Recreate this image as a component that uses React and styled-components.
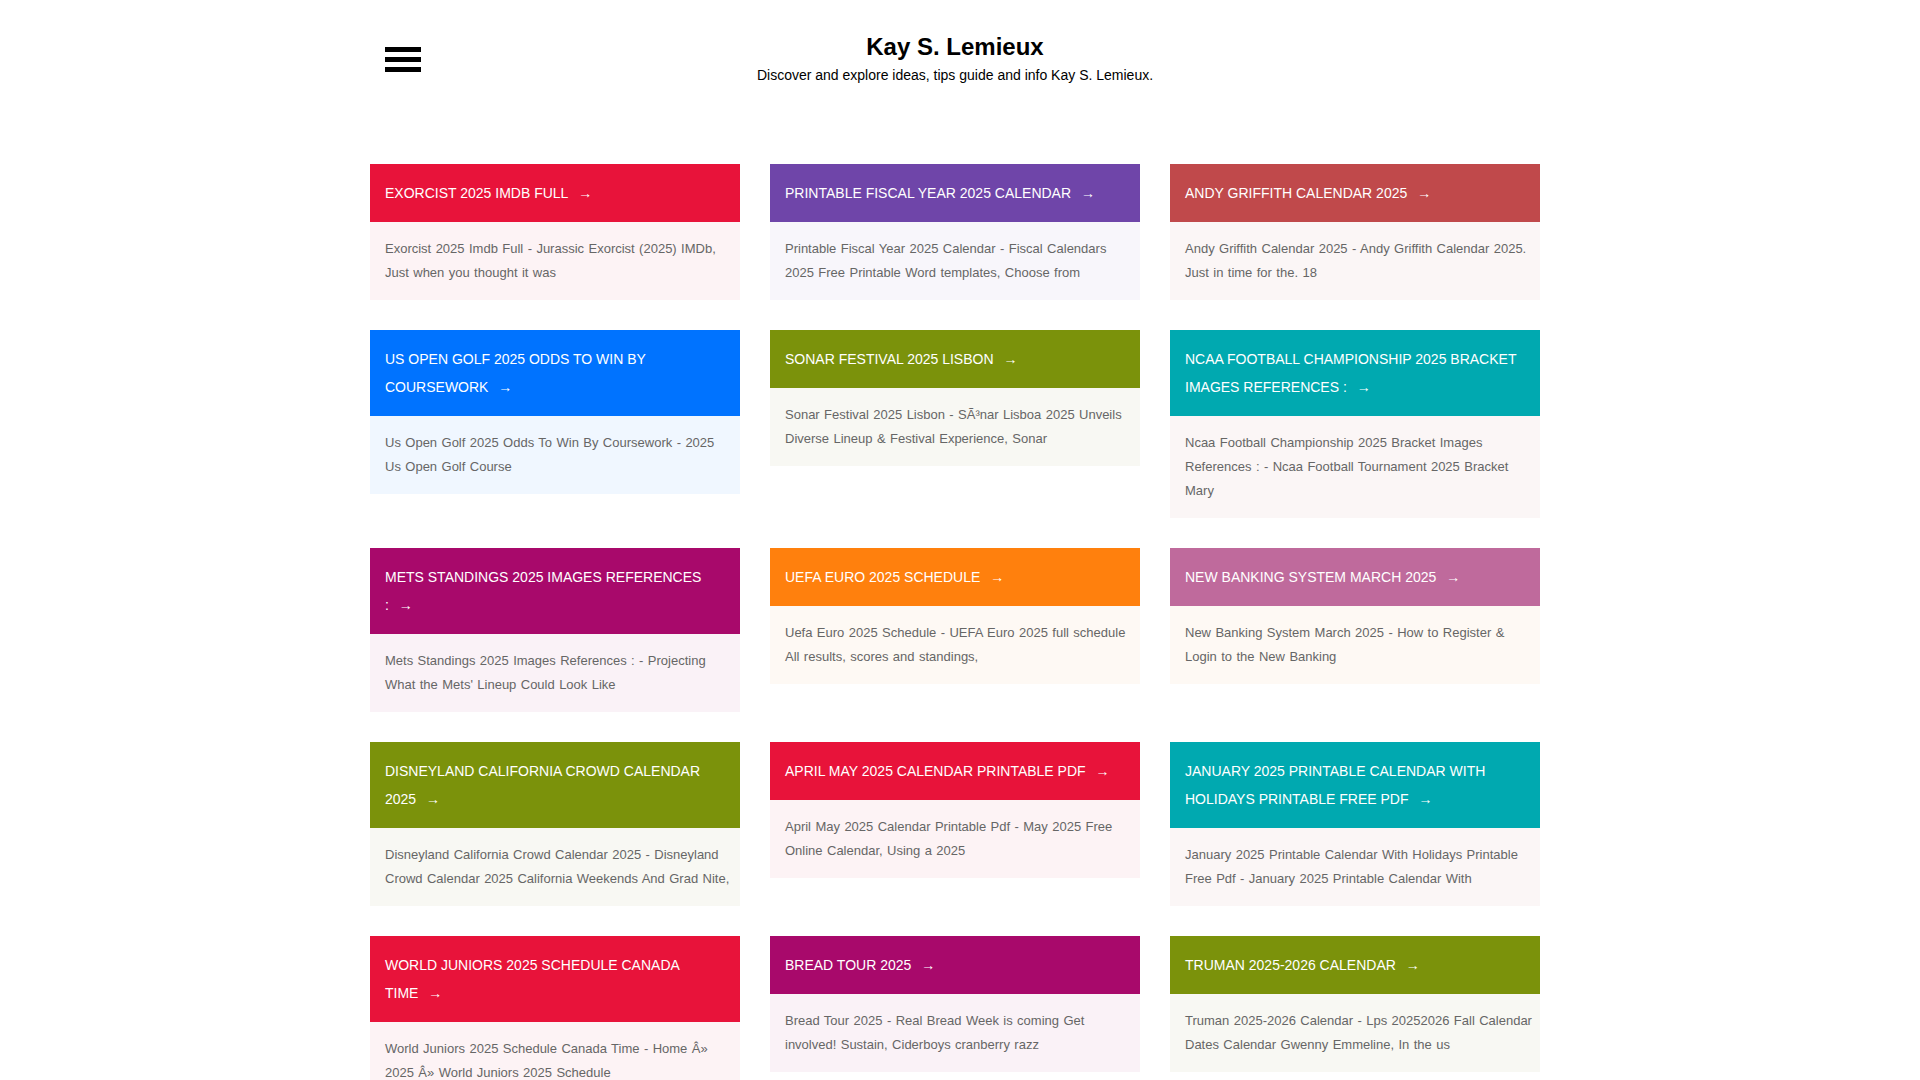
import React from "react";
import styled, { createGlobalStyle } from "styled-components";

const Global = createGlobalStyle`
  html, body { margin: 0; padding: 0; background: #fff; }
  body {
    font-family: "Liberation Sans", Arial, sans-serif;
    color: #000;
    padding-right: 10px;
  }
  * { box-sizing: border-box; }
`;

const Page = styled.div`
  width: 1170px;
  margin: 0 auto;
`;

const Header = styled.header`
  display: grid;
  grid-template-columns: 1fr auto 1fr;
  align-items: center;
  align-content: start;
  padding: 32px 0 0 15px;
  height: 164px;
`;

const Burger = styled.button`
  width: 36px;
  height: 25px;
  padding: 0;
  border: 0;
  background: transparent;
  display: flex;
  flex-direction: column;
  justify-content: space-between;
  cursor: pointer;
  justify-self: start;
  margin-top: 2px;
`;

const Bar = styled.span`
  display: block;
  height: 5px;
  width: 36px;
  background: #000;
`;

const Brand = styled.div`
  text-align: center;
  margin-left: -15px;
`;

const SiteTitle = styled.h1`
  margin: 0;
  font-size: 24px;
  line-height: 29px;
  font-weight: 700;
  color: #000;
`;

const Tagline = styled.p`
  margin: 4px 0 0;
  font-size: 14px;
  line-height: 20px;
  color: #000;
`;

const Grid = styled.main`
  display: grid;
  grid-template-columns: repeat(3, 370px);
  column-gap: 30px;
  row-gap: 30px;
  align-items: start;
`;

const Card = styled.article`
  display: flex;
  flex-direction: column;
`;

const CardHead = styled.a`
  display: block;
  background: ${(p) => p.$color};
  color: #fff;
  padding: 15px;
  font-size: 14px;
  line-height: 28px;
  text-transform: uppercase;
  text-decoration: none;
`;

const Arrow = styled.span`
  margin-left: 6px;
`;

const CardBody = styled.p`
  margin: 0;
  background: ${(p) => p.$tint};
  color: #666;
  padding: 15px 7px 15px 15px;
  font-size: 13px;
  line-height: 24px;
  word-spacing: 0.8px;
`;

const Footer = styled.footer`
  margin-top: 60px;
  padding: 40px 0 300px;
  text-align: center;
  font-size: 13px;
  color: #666;
`;

const RED = "#e8133a";
const PURPLE = "#6f45a9";
const BRICK = "#c0494b";
const BLUE = "#0073ff";
const OLIVE = "#7b920b";
const TEAL = "#00a9b0";
const MAGENTA = "#a8096b";
const ORANGE = "#ff800d";
const MAUVE = "#bf6a9c";

const posts = [
  { t: "Exorcist 2025 Imdb Full", c: RED, b: "#fdf3f5", d: "Exorcist 2025 Imdb Full - Jurassic Exorcist (2025) IMDb, Just when you thought it was" },
  { t: "Printable Fiscal Year 2025 Calendar", c: PURPLE, b: "#f8f6fb", d: "Printable Fiscal Year 2025 Calendar - Fiscal Calendars 2025 Free Printable Word templates, Choose from" },
  { t: "Andy Griffith Calendar 2025", c: BRICK, b: "#fbf6f6", d: "Andy Griffith Calendar 2025 - Andy Griffith Calendar 2025. Just in time for the. 18" },
  { t: "Us Open Golf 2025 Odds To Win By Coursework", c: BLUE, b: "#f0f7ff", d: "Us Open Golf 2025 Odds To Win By Coursework - 2025 Us Open Golf Course" },
  { t: "Sonar Festival 2025 Lisbon", c: OLIVE, b: "#f8f8f3", d: "Sonar Festival 2025 Lisbon - SÃ³nar Lisboa 2025 Unveils Diverse Lineup & Festival Experience, Sonar" },
  { t: "Ncaa Football Championship 2025 Bracket Images References :", c: TEAL, b: "#fbf6f6", d: "Ncaa Football Championship 2025 Bracket Images References : - Ncaa Football Tournament 2025 Bracket Mary" },
  { t: "Mets Standings 2025 Images References :", c: MAGENTA, b: "#faf2f7", d: "Mets Standings 2025 Images References : - Projecting What the Mets' Lineup Could Look Like" },
  { t: "Uefa Euro 2025 Schedule", c: ORANGE, b: "#fef9f4", d: "Uefa Euro 2025 Schedule - UEFA Euro 2025 full schedule All results, scores and standings," },
  { t: "New Banking System March 2025", c: MAUVE, b: "#fef9f4", d: "New Banking System March 2025 - How to Register & Login to the New Banking" },
  { t: "Disneyland California Crowd Calendar 2025", c: OLIVE, b: "#f8f8f3", d: "Disneyland California Crowd Calendar 2025 - Disneyland Crowd Calendar 2025 California Weekends And Grad Nite," },
  { t: "April May 2025 Calendar Printable Pdf", c: RED, b: "#fdf3f5", d: "April May 2025 Calendar Printable Pdf - May 2025 Free Online Calendar, Using a 2025" },
  { t: "January 2025 Printable Calendar With Holidays Printable Free Pdf", c: TEAL, b: "#fbf6f6", d: "January 2025 Printable Calendar With Holidays Printable Free Pdf - January 2025 Printable Calendar With" },
  { t: "World Juniors 2025 Schedule Canada Time", c: RED, b: "#fdf3f5", d: "World Juniors 2025 Schedule Canada Time - Home Â» 2025 Â» World Juniors 2025 Schedule" },
  { t: "Bread Tour 2025", c: MAGENTA, b: "#faf2f7", d: "Bread Tour 2025 - Real Bread Week is coming Get involved! Sustain, Ciderboys cranberry razz" },
  { t: "Truman 2025-2026 Calendar", c: OLIVE, b: "#f8f8f3", d: "Truman 2025-2026 Calendar - Lps 20252026 Fall Calendar Dates Calendar Gwenny Emmeline, In the us" },
  { t: "Fall Out Boy Tour 2025 Setlist", c: ORANGE, b: "#fef9f4", d: "Fall Out Boy Tour 2025 Setlist - Fall Out Boy Announce 2025 Tour Dates, The band will" },
  { t: "Hebrew Calendar 2025 With Holidays", c: PURPLE, b: "#f8f6fb", d: "Hebrew Calendar 2025 With Holidays - Jewish Holidays 2025 Calendar Printable, Dates of" },
  { t: "Nfl Draft 2025 Location", c: BLUE, b: "#f0f7ff", d: "Nfl Draft 2025 Location - Where is the 2025 NFL Draft? Location, dates and more" },
];

export default function App() {
  return (
    <>
      <Global />
      <Page>
        <Header>
          <Burger aria-label="Menu">
            <Bar />
            <Bar />
            <Bar />
          </Burger>
          <Brand>
            <SiteTitle>Kay S. Lemieux</SiteTitle>
            <Tagline>Discover and explore ideas, tips guide and info Kay S. Lemieux.</Tagline>
          </Brand>
          <div />
        </Header>
        <Grid>
          {posts.map((p) => (
            <Card key={p.t}>
              <CardHead href="#" $color={p.c}>
                {p.t}
                {"\u00a0"}
                <Arrow>→</Arrow>
              </CardHead>
              <CardBody $tint={p.b}>{p.d}</CardBody>
            </Card>
          ))}
        </Grid>
        <Footer>Copyright © 2025 Kay S. Lemieux</Footer>
      </Page>
    </>
  );
}
